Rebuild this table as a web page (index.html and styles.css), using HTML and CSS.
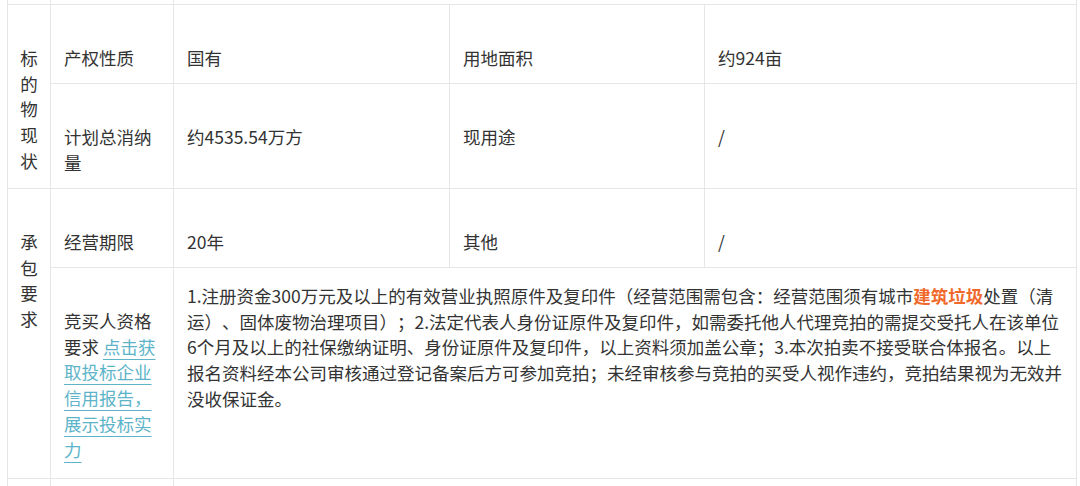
FILE: index.html
```html
<!DOCTYPE html>
<html lang="zh-CN">
<head>
<meta charset="utf-8">
<title>标的物信息</title>
<link rel="stylesheet" href="styles.css">
</head>
<body>
<div class="page">
  <table class="info">
    <colgroup>
      <col class="c-cat">
      <col class="c-label">
      <col class="c-val">
      <col class="c-label2">
      <col class="c-val2">
    </colgroup>
    <tbody>
      <tr class="r-edge-top"><td></td><td></td><td colspan="3"></td></tr>
      <tr class="r-short">
        <td class="cat" rowspan="2">标的物现状</td>
        <td>产权性质</td>
        <td>国有</td>
        <td>用地面积</td>
        <td>约924亩</td>
      </tr>
      <tr class="r-double">
        <td>计划总消纳量</td>
        <td>约4535.54万方</td>
        <td>现用途</td>
        <td>/</td>
      </tr>
      <tr class="r-short">
        <td class="cat" rowspan="2">承包要求</td>
        <td>经营期限</td>
        <td>20年</td>
        <td>其他</td>
        <td>/</td>
      </tr>
      <tr class="r-tall">
        <td>竞买人资格要求 <a class="link" href="#">点击获取投标企业信用报告，展示投标实力</a></td>
        <td class="long" colspan="3">1.注册资金300万元及以上的有效营业执照原件及复印件（经营范围需包含：经营范围须有城市<strong class="hl">建筑垃圾</strong>处置（清运）、固体废物治理项目）；2.法定代表人身份证原件及复印件，如需委托他人代理竞拍的需提交受托人在该单位6个月及以上的社保缴纳证明、身份证原件及复印件，以上资料须加盖公章；3.本次拍卖不接受联合体报名。以上报名资料经本公司审核通过登记备案后方可参加竞拍；未经审核参与竞拍的买受人视作违约，竞拍结果视为无效并没收保证金。</td>
      </tr>
      <tr class="r-edge-bottom"><td></td><td></td><td colspan="3"></td></tr>
    </tbody>
  </table>
</div>
</body>
</html>
```
FILE: styles.css
```css
html, body {
  margin: 0;
  padding: 0;
  background: #ffffff;
}

body {
  font-family: "Noto Sans CJK SC", "Noto Sans", sans-serif;
  font-size: 17.5px;
  line-height: 25.7px;
  color: #333333;
  text-spacing-trim: space-all;
}

.page {
  padding-left: 7px;
  height: 486px;
  overflow: hidden;
}

.info {
  table-layout: fixed;
  width: 1070px;
  border-collapse: separate;
  border-spacing: 0;
  border-left: 1px solid #e6e6e6;
}

.c-cat { width: 43px; }
.c-label { width: 123px; }
.c-val { width: 276px; }
.c-label2 { width: 255px; }
.c-val2 { width: 372px; }

.info td {
  border-right: 1px solid #e6e6e6;
  border-bottom: 1px solid #e6e6e6;
  padding: 40px 12px 0 13px;
  vertical-align: top;
  word-break: normal;
}

.r-edge-top { height: 5px; }
.r-edge-top td,
.r-edge-bottom td {
  padding: 0;
}
.r-short { height: 79px; }
.r-double { height: 105px; }
.r-tall { height: 211px; }
.r-edge-bottom { height: 40px; }

.info td.cat {
  padding: 40px 8px 0 8px;
  text-align: center;
}

.info td.long {
  padding-top: 15px;
}

.hl {
  color: #f0682a;
  font-weight: 700;
}

.link {
  color: #5db4c8;
  text-decoration: underline;
  text-decoration-color: #5db4c8;
  text-decoration-thickness: 1px;
  text-underline-offset: 5px;
}
```
